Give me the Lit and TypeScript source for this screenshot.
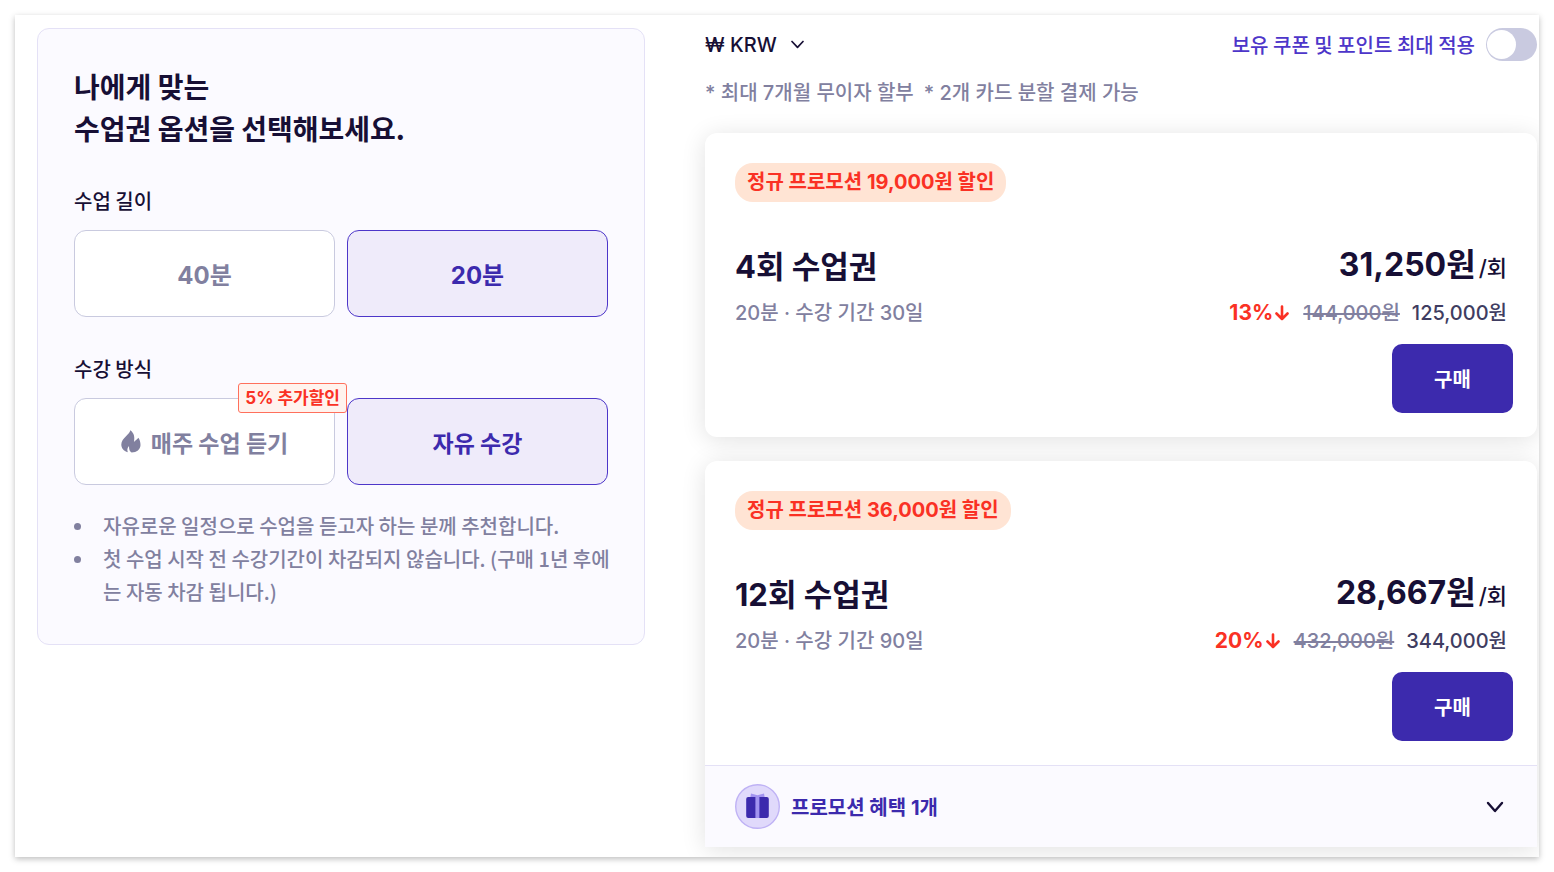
import { LitElement, html, css, svg, nothing } from "lit";
import { customElement, property, state } from "lit/decorators.js";

interface Ticket {
  count: number;
  promotion: string;
  days: number;
  unitPrice: string;
  rate: number;
  listPrice: string;
  price: string;
  benefits: number;
}

const tickets: Ticket[] = [
  { count: 4, promotion: "19,000", days: 30, unitPrice: "31,250", rate: 13, listPrice: "144,000", price: "125,000", benefits: 0 },
  { count: 12, promotion: "36,000", days: 90, unitPrice: "28,667", rate: 20, listPrice: "432,000", price: "344,000", benefits: 1 },
];

const chevron = (width: number) => svg`
  <path d="M2 2 L9 10 L16 2" fill="none" stroke="currentColor" stroke-width=${width}
    stroke-linecap="round" stroke-linejoin="round" />`;

@customElement("ticket-card")
export class TicketCard extends LitElement {
  @property({ attribute: false }) ticket!: Ticket;
  @property({ type: Number }) minutes = 20;

  static styles = css`
    :host {
      display: block;
      background: #fff;
      border-radius: 12px;
      box-shadow: 0 3px 24px rgba(0, 0, 0, 0.12);
    }
    :host([open-ended]) {
      border-radius: 12px 12px 0 0;
    }
    .body {
      padding: 30px 24px 24px 30px;
    }
    .promotion {
      display: inline-block;
      padding: 0 12px;
      border-radius: 18px;
      background: #ffe4d4;
      color: #fa3124;
      font-size: 20px;
      font-weight: 700;
      line-height: 39px;
      vertical-align: top;
    }
    .row {
      display: flex;
      justify-content: space-between;
      align-items: center;
      padding-right: 6px;
    }
    .main {
      height: 48px;
      margin-top: 41px;
      line-height: 48px;
    }
    .detail {
      height: 32px;
      margin-top: 6px;
      line-height: 32px;
      font-size: 20px;
      color: #81809f;
      font-weight: 500;
    }
    h2 {
      margin: 0;
      font-size: 31px;
      font-weight: 700;
    }
    .unit {
      font-size: 32px;
      font-weight: 700;
    }
    .per {
      font-size: 22px;
      font-weight: 500;
      margin-left: 3px;
    }
    .prices {
      display: flex;
      align-items: center;
    }
    .rate {
      display: flex;
      align-items: center;
      gap: 2px;
      color: #fa3124;
      font-weight: 700;
      font-size: 21px;
    }
    .rate svg {
      width: 14px;
      height: 16px;
    }
    del {
      margin: 0 12px 0 14px;
      text-decoration-thickness: 2px;
    }
    .price {
      color: #3f3d61;
    }
    .buy {
      display: block;
      width: 121px;
      height: 69px;
      margin: 15px 0 0 auto;
      border: 0;
      border-radius: 10px;
      background: #3c2aad;
      color: #fff;
      font: inherit;
      font-size: 20px;
      font-weight: 700;
      cursor: pointer;
    }
    .benefits {
      display: flex;
      align-items: center;
      gap: 11px;
      width: 100%;
      padding: 18px 33px 18px 30px;
      border: 0;
      border-top: 1px solid #e4e1f6;
      background: #fbfaff;
      color: #3c2aad;
      font: inherit;
      font-size: 20px;
      font-weight: 700;
      text-align: left;
      cursor: pointer;
    }
    .gift {
      display: block;
      width: 45px;
      height: 45px;
    }
    .caret {
      width: 18px;
      height: 12px;
      margin-left: auto;
      color: #170f35;
    }
  `;

  render() {
    const t = this.ticket;
    return html`
      <div class="body">
        <span class="promotion">정규 프로모션 ${t.promotion}원 할인</span>
        <div class="row main">
          <h2>${t.count}회 수업권</h2>
          <div><span class="unit">${t.unitPrice}원</span><span class="per">/회</span></div>
        </div>
        <div class="row detail">
          <span>${this.minutes}분 · 수강 기간 ${t.days}일</span>
          <div class="prices">
            <span class="rate">${t.rate}%<svg viewBox="0 0 14 16" aria-hidden="true">
                <path d="M7 1.5 V14 M1.5 8.5 L7 14 L12.5 8.5" fill="none" stroke="currentColor" stroke-width="2.6" stroke-linecap="round" stroke-linejoin="round" />
              </svg></span>
            <del>${t.listPrice}원</del>
            <span class="price">${t.price}원</span>
          </div>
        </div>
        <button class="buy" type="button">구매</button>
      </div>
      ${t.benefits
        ? html`<button class="benefits" type="button" aria-expanded="false">
            <svg class="gift" viewBox="0 0 45 45" aria-hidden="true">
              <circle cx="22.5" cy="22.5" r="21.8" fill="#e0d9fb" stroke="#bfb2f5" stroke-width="1.4" />
              <path d="M16 9.6 L22.5 11.3 L29 9.6 L29.8 14 H15.2 Z" fill="#a293f0" />
              <rect x="20" y="13" width="5" height="21" fill="#a293f0" />
              <path d="M13.2 13 H20.4 V34 H13.2 Q11.2 34 11.2 32 V15 Q11.2 13 13.2 13 Z M24.4 13 H31.8 Q33.8 13 33.8 15 V32 Q33.8 34 31.8 34 H24.4 Z" fill="#3c2aad" />
            </svg>
            <span>프로모션 혜택 ${t.benefits}개</span>
            <svg class="caret" viewBox="0 0 18 12" aria-hidden="true">${chevron(2.4)}</svg>
          </button>`
        : nothing}
    `;
  }
}

@customElement("app-root")
export class AppRoot extends LitElement {
  @state() private minutes = 20;
  @state() private plan = "free";

  static styles = css`
    :host {
      display: block;
      box-sizing: border-box;
      min-height: 100vh;
      padding: 15px;
      background: #fff;
      color: #170f35;
      font-family: Inter, "Noto Sans CJK KR", sans-serif;
      font-size: 20px;
      font-weight: 500;
    }
    .sheet {
      display: grid;
      grid-template-columns: 608fr 832fr;
      gap: 60px;
      align-items: start;
      box-sizing: border-box;
      min-height: calc(100vh - 30px);
      padding: 13px 2px 9px 22px;
      background: #fff;
      box-shadow: 0 2px 6px rgba(0, 0, 0, 0.26);
      overflow: hidden;
    }
    .panel {
      padding: 36px;
      border: 1px solid #e4e1f6;
      border-radius: 12px;
      background: #fbfaff;
      font-family: "Noto Sans CJK KR", sans-serif;
    }
    h1 {
      margin: 0;
      font-size: 28px;
      line-height: 42px;
      font-weight: 700;
    }
    fieldset {
      min-width: 0;
      margin: 36px 0 0;
      padding: 0;
      border: 0;
    }
    legend {
      padding: 0;
      line-height: 32px;
    }
    .choices {
      display: grid;
      grid-template-columns: 1fr 1fr;
      gap: 12px;
      margin-top: 13px;
    }
    .choice {
      position: relative;
      display: flex;
      align-items: center;
      justify-content: center;
      gap: 10px;
      box-sizing: border-box;
      height: 87px;
      border: 1px solid #c9cadf;
      border-radius: 12px;
      background: #fff;
      color: #81809f;
      font-size: 23px;
      font-weight: 700;
      cursor: pointer;
    }
    .choice:has(input:checked) {
      border-color: #4d36c9;
      background: #efebfa;
      color: #3c2aad;
    }
    .choice input {
      position: absolute;
      inset: 0;
      margin: 0;
      opacity: 0;
    }
    .minutes,
    .badge {
      font-family: Inter, "Noto Sans CJK KR", sans-serif;
    }
    .minutes {
      font-size: 24px;
    }
    .flame {
      width: 20px;
      height: 23px;
    }
    .badge {
      position: absolute;
      top: -16px;
      right: -13px;
      z-index: 1;
      padding: 0 6px;
      border: 1px solid #ff705c;
      border-radius: 3px;
      background: #fff3ee;
      color: #fa3124;
      font-size: 17px;
      line-height: 28px;
    }
    ul {
      margin: 24px -4px 0 0;
      padding: 0;
      list-style: none;
      color: #81809f;
      line-height: 33px;
    }
    li {
      display: flex;
      gap: 22px;
    }
    li::before {
      content: "";
      flex: none;
      width: 7px;
      height: 7px;
      margin-top: 14px;
      border-radius: 50%;
      background: currentColor;
    }
    .bar {
      display: flex;
      align-items: center;
      justify-content: space-between;
      height: 33px;
    }
    .currency {
      display: flex;
      align-items: center;
    }
    select {
      appearance: none;
      padding: 0 32px 0 0;
      margin: 0 -18px 0 0;
      border: 0;
      background: transparent;
      color: inherit;
      font: inherit;
      line-height: 32px;
      cursor: pointer;
    }
    .currency svg {
      width: 13px;
      height: 9px;
      pointer-events: none;
    }
    .apply {
      display: flex;
      align-items: center;
      gap: 11px;
      color: #4d36c9;
      font-family: "Noto Sans CJK KR", sans-serif;
      cursor: pointer;
    }
    .apply input {
      appearance: none;
      display: flex;
      width: 51px;
      height: 33px;
      margin: 0;
      padding: 2px 1px;
      box-sizing: border-box;
      border-radius: 17px;
      background: #c9cae0;
      cursor: pointer;
    }
    .apply input::before {
      content: "";
      width: 29px;
      height: 29px;
      border-radius: 50%;
      background: #fff;
    }
    .apply input:checked {
      justify-content: flex-end;
      background: #4d36c9;
    }
    .notes {
      display: flex;
      gap: 10px;
      margin: 16px 0 24px;
      color: #81809f;
      line-height: 32px;
    }
    .cards {
      display: grid;
      gap: 24px;
    }
  `;

  render() {
    return html`
      <main class="sheet">
        <section class="panel">
          <h1>나에게 맞는<br />수업권 옵션을 선택해보세요.</h1>
          <fieldset>
            <legend>수업 길이</legend>
            <div class="choices">
              ${[40, 20].map(
                (m) => html`<label class="choice">
                  <input type="radio" name="minutes" .checked=${this.minutes === m} @change=${() => (this.minutes = m)} />
                  <span class="minutes">${m}분</span>
                </label>`
              )}
            </div>
          </fieldset>
          <fieldset>
            <legend>수강 방식</legend>
            <div class="choices">
              <label class="choice">
                <input type="radio" name="plan" .checked=${this.plan === "weekly"} @change=${() => (this.plan = "weekly")} />
                <svg class="flame" viewBox="0 0 20 23" aria-hidden="true">
                  <path d="M9.2 0.3 C9.2 4.4 0.4 8 0.3 14.6 C0.3 18.4 2.6 21 6.8 22.3 C6 19.8 6.2 18 8 16 C8 19.5 8.6 21.6 10.6 22.4 C15.6 22.4 19.5 19.5 19.5 15 C19.5 12.2 18.7 9.8 17.4 7.8 C16.4 9.4 14.6 10.2 12.9 12 C13.9 8 13.4 3 9.2 0.3 Z" fill="currentColor" />
                </svg>
                <span>매주 수업 듣기</span>
                <span class="badge">5% 추가할인</span>
              </label>
              <label class="choice">
                <input type="radio" name="plan" .checked=${this.plan === "free"} @change=${() => (this.plan = "free")} />
                <span>자유 수강</span>
              </label>
            </div>
          </fieldset>
          <ul>
            <li>자유로운 일정으로 수업을 듣고자 하는 분께 추천합니다.</li>
            <li>첫 수업 시작 전 수강기간이 차감되지 않습니다. (구매 1년 후에는 자동 차감 됩니다.)</li>
          </ul>
        </section>
        <section>
          <div class="bar">
            <div class="currency">
              <select aria-label="통화">
                <option>₩ KRW</option>
              </select>
              <svg viewBox="0 0 13 9" aria-hidden="true">
                <path d="M1 1.5 L6.5 7.3 L12 1.5" fill="none" stroke="currentColor" stroke-width="1.7" stroke-linecap="round" stroke-linejoin="round" />
              </svg>
            </div>
            <label class="apply">
              <span>보유 쿠폰 및 포인트 최대 적용</span>
              <input type="checkbox" role="switch" />
            </label>
          </div>
          <div class="notes">
            <span>* 최대 7개월 무이자 할부</span>
            <span>* 2개 카드 분할 결제 가능</span>
          </div>
          <div class="cards">
            ${tickets.map(
              (t) => html`<ticket-card .ticket=${t} .minutes=${this.minutes} ?open-ended=${t.benefits > 0}></ticket-card>`
            )}
          </div>
        </section>
      </main>
    `;
  }
}
